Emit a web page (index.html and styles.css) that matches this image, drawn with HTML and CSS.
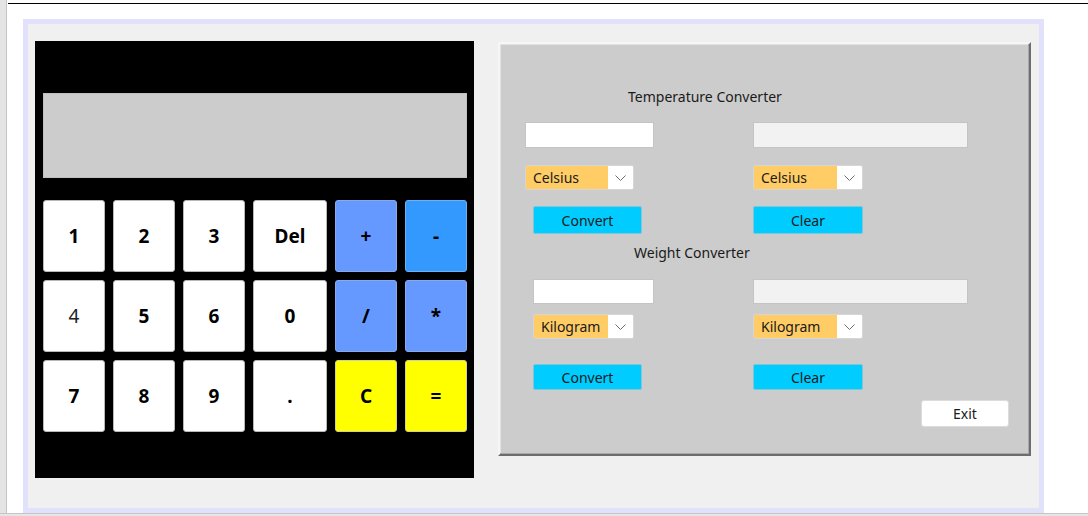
FILE: index.html
```html
<!DOCTYPE html>
<html>
<head>
<meta charset="utf-8">
<link rel="stylesheet" href="styles.css">
</head>
<body>
<div class="window">
  <aside class="side"></aside>
  <main class="main">
    <div class="topline"></div>
    <div class="frame">
      <section class="calc">
        <div class="display"></div>
        <div class="keypad">
          <button class="key">1</button>
          <button class="key">2</button>
          <button class="key">3</button>
          <button class="key">Del</button>
          <button class="key op">+</button>
          <button class="key minus">-</button>
          <button class="key thin">4</button>
          <button class="key">5</button>
          <button class="key">6</button>
          <button class="key">0</button>
          <button class="key op">/</button>
          <button class="key op">*</button>
          <button class="key">7</button>
          <button class="key">8</button>
          <button class="key">9</button>
          <button class="key">.</button>
          <button class="key yellow">C</button>
          <button class="key yellow">=</button>
        </div>
      </section>
      <section class="conv">
        <div class="title title-temp">Temperature Converter</div>
        <div class="row row-in1">
          <div class="cell pad-a"><div class="field f-a1"></div></div>
          <div class="cell"><div class="field out f-b"></div></div>
        </div>
        <div class="row row-cb1">
          <div class="cell pad-a">
            <div class="combo cb-a1"><span class="combo-val">Celsius</span><span class="combo-arrow"><svg width="11" height="6" viewBox="0 0 11 6"><polyline points="0.5,0.5 5.5,5.5 10.5,0.5" fill="none" stroke="#6e6e6e" stroke-width="1"/></svg></span></div>
          </div>
          <div class="cell">
            <div class="combo cb-b"><span class="combo-val">Celsius</span><span class="combo-arrow"><svg width="11" height="6" viewBox="0 0 11 6"><polyline points="0.5,0.5 5.5,5.5 10.5,0.5" fill="none" stroke="#6e6e6e" stroke-width="1"/></svg></span></div>
          </div>
        </div>
        <div class="row row-bt1">
          <div class="cell pad-b"><button class="btn">Convert</button></div>
          <div class="cell"><button class="btn">Clear</button></div>
        </div>
        <div class="title title-weight">Weight Converter</div>
        <div class="row row-in2">
          <div class="cell pad-b"><div class="field f-a2"></div></div>
          <div class="cell"><div class="field out f-b"></div></div>
        </div>
        <div class="row row-cb2">
          <div class="cell pad-b">
            <div class="combo cb-a2"><span class="combo-val">Kilogram</span><span class="combo-arrow"><svg width="11" height="6" viewBox="0 0 11 6"><polyline points="0.5,0.5 5.5,5.5 10.5,0.5" fill="none" stroke="#6e6e6e" stroke-width="1"/></svg></span></div>
          </div>
          <div class="cell">
            <div class="combo cb-b"><span class="combo-val">Kilogram</span><span class="combo-arrow"><svg width="11" height="6" viewBox="0 0 11 6"><polyline points="0.5,0.5 5.5,5.5 10.5,0.5" fill="none" stroke="#6e6e6e" stroke-width="1"/></svg></span></div>
          </div>
        </div>
        <div class="row row-bt2">
          <div class="cell pad-b"><button class="btn">Convert</button></div>
          <div class="cell"><button class="btn">Clear</button></div>
        </div>
        <div class="exit-row"><button class="exit">Exit</button></div>
      </section>
    </div>
  </main>
</div>
</body>
</html>
```
FILE: styles.css
```css
* { box-sizing: border-box; }
html, body { margin: 0; padding: 0; }
body {
  background: #e6e6e6;
  font-family: "Noto Sans", "Open Sans", sans-serif;
  color: #1a1a1a;
  width: 1088px;
  height: 516px;
  overflow: hidden;
}
.window {
  display: flex;
  height: 514px;
  background: #ffffff;
  border-bottom: 1px solid #c6c6c6;
}
.side {
  width: 7px;
  background: #e4e4e4;
  border-right: 1px solid #c4c4c4;
}
.main {
  flex: 1;
  padding-top: 3px;
}
.topline {
  height: 1px;
  background: #000;
  margin-left: 1px;
}
.frame {
  margin: 15px 0 0 16px;
  width: 1021px;
  height: 494px;
  border: 5px solid #e1e1fc;
  background: #f0f0f0;
  display: flex;
  align-items: flex-start;
  gap: 24px;
  padding: 17px 0 0 7px;
}
/* calculator */
.calc {
  width: 439px;
  height: 437px;
  background: #000;
  padding: 52px 7px 0 8px;
}
.display {
  width: 424px;
  height: 85px;
  background: #cccccc;
  border: 1px solid #c0c0c0;
}
.keypad {
  margin-top: 22px;
  display: grid;
  grid-template-columns: 62px 62px 62px 74px 62px 62px;
  grid-auto-rows: 72px;
  gap: 8px;
}
.key {
  margin: 0;
  padding: 0;
  background: #ffffff;
  border: 1px solid #b8b8b8;
  border-radius: 3px;
  font-family: "Noto Sans", "Open Sans", sans-serif;
  font-weight: 700;
  font-size: 19px;
  color: #000;
}
.key.thin { font-weight: 400; color: #222; }
.key.op { background: #6699ff; border-color: #8aa9e8; }
.key.minus { background: #3399ff; border-color: #6fb0ee; }
.key.yellow { background: #ffff00; border-color: #d4d48a; }
/* converter panel */
.conv {
  margin-top: 1px;
  width: 533px;
  height: 414px;
  background: #cccccc;
  border: 2px solid;
  border-color: #f6f6f6 #6d6d6d #6d6d6d #f6f6f6;
  box-shadow: inset -1px -1px 0 #a8a8a8, inset 1px 1px 0 #e2e2e2;
}
.title {
  height: 20px;
  line-height: 20px;
  font-size: 14px;
  white-space: nowrap;
}
.title-temp { margin-top: 43px; padding-left: 128px; }
.title-weight { margin-top: 9px; padding-left: 134px; }
.row {
  display: grid;
  grid-template-columns: 253px 1fr;
}
.cell { display: flex; }
.pad-a { padding-left: 25px; }
.pad-b { padding-left: 33px; }
.row-in1 { margin-top: 15px; height: 26px; }
.row-cb1 { margin-top: 17px; height: 25px; }
.row-bt1 { margin-top: 16px; height: 28px; }
.row-in2 { margin-top: 16px; height: 25px; }
.row-cb2 { margin-top: 10px; height: 25px; }
.row-bt2 { margin-top: 25px; height: 26px; }
.field {
  height: 100%;
  background: #ffffff;
  border: 1px solid #c4c4c4;
}
.field.out { background: #f2f2f2; }
.f-a1 { width: 129px; }
.f-a2 { width: 121px; }
.f-b { width: 215px; }
.combo {
  height: 100%;
  display: flex;
  border: 1px solid #d6d6d6;
  border-radius: 2px;
  overflow: hidden;
  background: #ffcc66;
}
.cb-a1 { width: 109px; }
.cb-a2 { width: 101px; }
.cb-b { width: 110px; }
.combo-val {
  flex: 1;
  font-size: 14px;
  line-height: 23px;
  padding-left: 7px;
  white-space: nowrap;
}
.combo-arrow {
  width: 25px;
  background: #ffffff;
  display: flex;
  align-items: center;
  justify-content: center;
}
.combo-arrow svg { display: block; }
.btn {
  margin: 0;
  padding: 0;
  width: 109px;
  height: 100%;
  background: #00ccff;
  border: 1px solid #7fc6dc;
  border-radius: 2px;
  font-family: "Noto Sans", "Open Sans", sans-serif;
  font-size: 14px;
  color: #1a1a1a;
}
.row .cell:last-child .btn { width: 110px; }
.exit-row {
  margin-top: 10px;
  padding-left: 421px;
}
.exit {
  margin: 0;
  padding: 0;
  width: 88px;
  height: 27px;
  background: #ffffff;
  border: 1px solid #dcdcdc;
  border-radius: 3px;
  font-family: "Noto Sans", "Open Sans", sans-serif;
  font-size: 14px;
  color: #1a1a1a;
}
```
